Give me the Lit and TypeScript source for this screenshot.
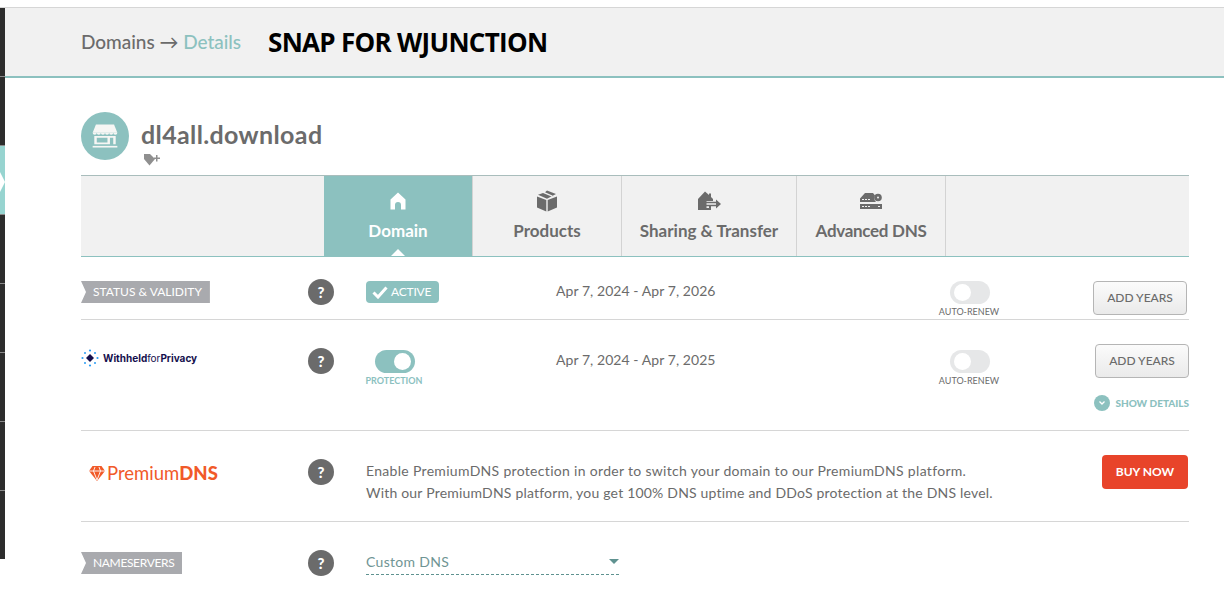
import { css, html, LitElement, svg } from "lit";
import { customElement } from "lit/decorators.js";

const question = html`<span class="help">?</span>`;

const toggle = (on: boolean, label: string) => html`
  <div class="toggle-wrap ${on ? "on" : ""}">
    <span class="toggle"><span class="knob"></span></span>
    <span class="toggle-label">${label}</span>
  </div>
`;

const storeIcon = svg`<svg class="store" width="28" height="28" viewBox="0 0 34 34">
  <path fill="#f6f6f4" d="M6 3h22l4 10H2z"/>
  <path fill="#f6f6f4" d="M2 13a2.500 2.500 0 0 0 5 0 2.500 2.500 0 0 0 5 0 2.500 2.500 0 0 0 5 0 2.500 2.500 0 0 0 5 0 2.500 2.500 0 0 0 5 0 2.500 2.500 0 0 0 5 0z"/>
  <path fill="#f6f6f4" fill-rule="evenodd" d="M4 17h26v10H4zM7 19v6h13v-6zM23 19v8h4v-8z"/>
  <rect fill="#f6f6f4" x="2" y="29" width="30" height="2"/>
</svg>`;

const tabs = [
  {
    name: "Domain",
    width: 148,
    active: true,
    icon: svg`<svg width="18" height="18" viewBox="0 0 18 18"><path fill="currentColor" d="M9 .5 16.500 7.500V17.500H12V13a3 3 0 0 0-6 0V17.500H1.500V7.500z"/></svg>`,
  },
  {
    name: "Products",
    width: 148,
    icon: svg`<svg width="22" height="22" viewBox="0 0 22 22"><path fill="currentColor" d="M1 6.500 10.300 10V21.500L1 17.500zM21 6.500 11.700 10V21.500L21 17.500zM11 .5 20 4 11 8.700 2 4.800 7 3 15.500 6.500 17 5.700 9 2.200z"/></svg>`,
  },
  {
    name: "Sharing & Transfer",
    width: 174,
    icon: svg`<svg width="24" height="20" viewBox="0 0 24 20"><path fill="currentColor" d="M8 .5 12 4V2.500h2V6l2 2v2H9.500v7H12v-3h2v5H1V8z"/><path fill="none" stroke="currentColor" stroke-width="1.700" d="M9 11.500h12M9 14.500h12"/><path fill="currentColor" d="M19 8.500 24 13l-5 4.500z"/></svg>`,
  },
  {
    name: "Advanced DNS",
    width: 148,
    tight: true,
    icon: svg`<svg width="24" height="18" viewBox="0 0 24 18"><path fill="currentColor" d="M6 1h8l2 2.500a5.500 5.500 0 0 0 1 6.500H1V6.500z"/><circle cx="19" cy="5.500" r="3.800" fill="currentColor"/><circle cx="19" cy="5.500" r="1" fill="#f1f1f1"/><path fill="currentColor" fill-rule="evenodd" d="M1 12h22v5H1zM3 14v1h2v-1zM6 14v1h2v-1zM9 14v1h2v-1zM19 14v1h2v-1z"/><path fill="#f1f1f1" d="M3 7h2v1H3zM6 7h2v1H6zM9 7h2v1H9z"/></svg>`,
  },
];

const wfpLogo = svg`<svg width="18" height="18" viewBox="0 0 18 18">
  <path fill="#15104d" d="M9 5 13 9 9 13 5 9z"/>
  <g fill="#2a9df4">
    <circle cx="9" cy="1.500" r="1.100"/><circle cx="9" cy="16.500" r="1.100"/>
    <circle cx="1.500" cy="9" r="1.100"/><circle cx="16.500" cy="9" r="1.100"/>
    <circle cx="4" cy="4" r="1"/><circle cx="14" cy="4" r="1"/>
    <circle cx="4" cy="14" r="1"/><circle cx="14" cy="14" r="1"/>
  </g>
</svg>`;

const gem = svg`<svg width="16" height="15" viewBox="0 0 16 15">
  <path fill="#f15a29" d="M3.500 0h9L16 5 8 15 0 5z"/>
  <path fill="none" stroke="#fff" stroke-width=".9" d="M0 5h16M4.500 5 8 14l3.500-9M4.500 5 6 1M11.500 5 10 1"/>
</svg>`;

@customElement("app-root")
export class AppRoot extends LitElement {
  static styles = css`
    :host {
      display: block;
      width: 1224px;
      height: 597px;
      overflow: hidden;
      position: relative;
      background: #fff;
      color: #6b6b6b;
      font-family: Lato, "Open Sans", sans-serif;
    }

    * {
      box-sizing: border-box;
    }

    .rail {
      position: absolute;
      left: 0;
      top: 8px;
      width: 5px;
      height: 551px;
      overflow: hidden;
      display: flex;
      flex-direction: column;
      background: #2d2d2d;
    }

    .rail span {
      flex: none;
      height: 69px;
      border-bottom: 1px solid #8a8a8a;
    }

    .rail span.current {
      background: #97d4d0;
    }

    .rail span:last-child {
      border-bottom: none;
    }

    .notch {
      position: absolute;
      left: 0;
      top: 172px;
      width: 5px;
      height: 20px;
      background: #fff;
      clip-path: polygon(0 0, 100% 50%, 0 100%);
    }

    .top {
      margin-top: 7px;
      height: 71px;
      padding: 0 0 2px 81px;
      display: flex;
      align-items: center;
      gap: 27px;
      background: #f1f1f1;
      border-top: 1px solid #d6d6d6;
      border-bottom: 2px solid #8cc1bf;
    }

    .crumb {
      font-size: 19px;
      font-weight: 500;
      color: #6b6b6b;
      letter-spacing: -0.03px;
    }

    .crumb em {
      font-style: normal;
      color: #8cc1bf;
    }

    .snap {
      font-size: 26px;
      font-weight: 700;
      line-height: 30px;
      margin-top: 2px;
      color: #000;
      font-family: "Open Sans", sans-serif;
      letter-spacing: -0.7px;
    }

    main {
      padding: 34px 35px 0 81px;
    }

    .title {
      display: flex;
      gap: 12px;
      height: 63px;
    }

    .avatar {
      width: 48px;
      height: 48px;
      border-radius: 50%;
      background: #8cc1bf;
      display: flex;
      align-items: center;
      justify-content: center;
    }

    .name {
      font-size: 25px;
      font-weight: 700;
      line-height: 30px;
      margin-top: 7px;
      color: #6b6b6b;
      letter-spacing: 0.37px;
    }

    .tag-add {
      display: block;
      margin: 4px 0 0 2px;
    }

    .tabs {
      display: flex;
      height: 82px;
      padding-left: 243px;
      background: #f1f1f1;
      border-top: 1px solid #a9bdbc;
      border-bottom: 1px solid #8cc1bf;
    }

    .tab {
      display: flex;
      flex-direction: column;
      align-items: center;
      border-right: 1px solid #d3d3d3;
      font-size: 17px;
      font-weight: 700;
      color: #6b6b6b;
      position: relative;
    }

    .tab .ico {
      height: 44px;
      display: flex;
      align-items: center;
      padding-top: 6px;
    }

    .tab.tight {
      letter-spacing: -0.3px;
    }

    .tab.active {
      background: #8cc1bf;
      color: #fff;
    }

    .tab.active::after {
      content: "";
      position: absolute;
      left: 50%;
      bottom: 0;
      margin-left: -7px;
      border: 7px solid transparent;
      border-top: 0;
      border-bottom-color: #fff;
    }

    .row {
      display: grid;
      grid-template-columns: 227px 58px 190px 394px 1fr;
      align-items: start;
      border-bottom: 1px solid #d6d6d6;
    }

    .r1 {
      height: 63px;
      padding-top: 22px;
    }

    .r2 {
      height: 111px;
      padding-top: 28px;
    }

    .r3 {
      height: 91px;
      padding-top: 28px;
      grid-template-columns: 227px 58px 1fr auto;
    }

    .r4 {
      border-bottom: none;
      padding-top: 28px;
      grid-template-columns: 227px 58px 253px;
    }

    .help {
      width: 26px;
      height: 26px;
      border-radius: 50%;
      background: #6b6b6b;
      color: #fff;
      font-weight: 900;
      font-size: 15px;
      display: flex;
      align-items: center;
      justify-content: center;
    }

    .ribbon {
      display: inline-block;
      height: 22px;
      line-height: 22px;
      margin-top: 2px;
      padding: 0 8px 0 12px;
      background: #a9aaae;
      color: #fff;
      font-size: 12px;
      clip-path: polygon(0 0, 100% 0, 100% 100%, 0 100%, 5px 50%);
    }

    .ribbon.tight {
      letter-spacing: -0.35px;
    }

    .badge {
      display: inline-flex;
      align-items: center;
      gap: 3px;
      height: 22px;
      margin-top: 2px;
      padding: 0 8px 0 6px;
      border-radius: 4px;
      background: #8cc1bf;
      color: #fff;
      font-size: 12px;
      line-height: 20px;
      letter-spacing: -0.2px;
    }

    .dates {
      font-size: 14px;
      line-height: 20px;
      margin-top: 2px;
      color: #6b6b6b;
      letter-spacing: 0.06px;
    }

    .end {
      display: flex;
      justify-content: space-between;
      align-items: flex-start;
    }

    .toggle-wrap {
      display: inline-flex;
      flex-direction: column;
      align-items: center;
      width: 40px;
    }

    .toggle {
      display: flex;
      width: 40px;
      height: 23px;
      border-radius: 12px;
      background: #e6e7e8;
      padding: 3px 4px;
      flex: none;
    }

    .knob {
      width: 17px;
      height: 17px;
      border-radius: 50%;
      background: #fff;
    }

    .on .toggle {
      background: #8cc1bf;
      justify-content: flex-end;
    }

    .toggle-label {
      font-size: 9px;
      line-height: 12px;
      margin: 2px 0 0 -2px;
      white-space: nowrap;
      color: #6b6b6b;
    }

    .on .toggle-label {
      color: #8cc1bf;
      font-weight: 700;
    }

    .btn {
      width: 94px;
      height: 34px;
      border: 1px solid #b5b5b5;
      border-radius: 4px;
      background: linear-gradient(#fbfbfb, #eaeaea);
      color: #6b6b6b;
      font: 500 12px Lato, sans-serif;
    }

    .actions {
      display: flex;
      flex-direction: column;
      align-items: flex-end;
    }

    .r2 .btn {
      margin-top: -4px;
      padding-bottom: 3px;
    }

    .r1 .end {
      padding-right: 2px;
    }

    .r1 .btn {
      margin-top: 2px;
      padding-bottom: 2px;
    }

    .row-toggle {
      margin-top: 2px;
    }

    .row-toggle.indent {
      padding-left: 9px;
    }

    .more {
      display: flex;
      align-items: center;
      gap: 5px;
      margin-top: 17px;
      font-size: 10px;
      font-weight: 900;
      color: #8cc1bf;
    }

    .more i {
      width: 16px;
      height: 16px;
      border-radius: 50%;
      background: #8cc1bf;
      display: flex;
      align-items: center;
      justify-content: center;
    }

    .wfp {
      display: flex;
      align-items: center;
      gap: 4px;
      margin-top: 1px;
      font-family: Inter, sans-serif;
      font-size: 10px;
      font-weight: 700;
      color: #15104d;
    }

    .wfp b {
      font-weight: 400;
    }

    .pdns {
      display: flex;
      align-items: center;
      gap: 2px;
      margin: 3px 0 0 8px;
      font-size: 18.500px;
      font-weight: 400;
      color: #f15a29;
    }

    .pdns strong {
      font-weight: 900;
    }

    .copy {
      font-size: 14px;
      line-height: 22px;
      color: #6b6b6b;
      letter-spacing: 0.2px;
      margin-top: 1px;
    }

    .copy span {
      letter-spacing: 0.31px;
    }

    .buy {
      width: 86px;
      height: 34px;
      margin: -4px 1px 0 0;
      padding-bottom: 3px;
      border: none;
      border-radius: 4px;
      background: #e8442a;
      color: #fff;
      font: 700 12px Lato, sans-serif;
    }

    .select {
      display: flex;
      align-items: center;
      justify-content: space-between;
      height: 25px;
      padding-bottom: 2px;
      border-bottom: 1px dashed #5f9290;
      color: #6f9594;
      font-size: 14px;
      letter-spacing: 0.3px;
    }

    .select i {
      border: 5px solid transparent;
      border-bottom: 0;
      border-top: 5px solid #5f9290;
    }
  `;

  render() {
    return html`
      <div class="rail">
        <span></span>
        <span></span>
        <span class="current"></span>
        <span></span>
        <span></span>
        <span></span>
        <span></span>
        <span></span>
      </div>
      <div class="notch"></div>
      <div class="top">
        <span class="crumb">Domains → <em>Details</em></span>
        <span class="snap">SNAP FOR WJUNCTION</span>
      </div>
      <main>
        <div class="title">
          <div class="avatar">${storeIcon}</div>
          <div>
            <div class="name">dl4all.download</div>
            <svg class="tag-add" width="18" height="13" viewBox="0 0 18 13">
              <path fill="#8f8f8f" d="M1 1h6l5 5-5.500 6.500L1 6z" />
              <path fill="#8f8f8f" d="M13 2h1.500v2.500H17V6h-2.500v2.500H13V6h-2V4.500h2z" />
            </svg>
          </div>
        </div>

        <div class="tabs">
          ${tabs.map(
            (t) => html`
              <div class="tab ${t.active ? "active" : ""} ${t.tight ? "tight" : ""}" style="width:${t.width + 1}px">
                <span class="ico">${t.icon}</span>
                <span>${t.name}</span>
              </div>
            `
          )}
        </div>

        <div class="row r1">
          <div><span class="ribbon">STATUS &amp; VALIDITY</span></div>
          ${question}
          <div>
            <span class="badge">
              <svg width="16" height="13" viewBox="0 0 16 13">
                <path fill="none" stroke="#fff" stroke-width="3" d="M1.500 6.500 6 11 14.500 1.500" />
              </svg>
              ACTIVE
            </span>
          </div>
          <div class="dates">Apr 7, 2024 - Apr 7, 2026</div>
          <div class="end">
            <div class="row-toggle">${toggle(false, "AUTO-RENEW")}</div>
            <button class="btn">ADD YEARS</button>
          </div>
        </div>

        <div class="row r2">
          <div class="wfp">${wfpLogo}<span>Withheld<b>for</b>Privacy</span></div>
          ${question}
          <div class="row-toggle indent">${toggle(true, "PROTECTION")}</div>
          <div class="dates">Apr 7, 2024 - Apr 7, 2025</div>
          <div class="end">
            <div class="row-toggle">${toggle(false, "AUTO-RENEW")}</div>
            <div class="actions">
              <button class="btn">ADD YEARS</button>
              <div class="more">
                <i>
                  <svg width="8" height="6" viewBox="0 0 8 6">
                    <path fill="none" stroke="#fff" stroke-width="1.300" d="M1.500 1.500 4 4l2.500-2.500" />
                  </svg>
                </i>
                SHOW DETAILS
              </div>
            </div>
          </div>
        </div>

        <div class="row r3">
          <div class="pdns">${gem}<span>Premium<strong>DNS</strong></span></div>
          ${question}
          <div class="copy">
            <span>Enable PremiumDNS protection in order to switch your domain to our PremiumDNS platform.</span><br />
            With our PremiumDNS platform, you get 100% DNS uptime and DDoS protection at the DNS level.
          </div>
          <button class="buy">BUY NOW</button>
        </div>

        <div class="row r4">
          <div><span class="ribbon tight">NAMESERVERS</span></div>
          ${question}
          <div class="select">Custom DNS<i></i></div>
        </div>
      </main>
    `;
  }
}
